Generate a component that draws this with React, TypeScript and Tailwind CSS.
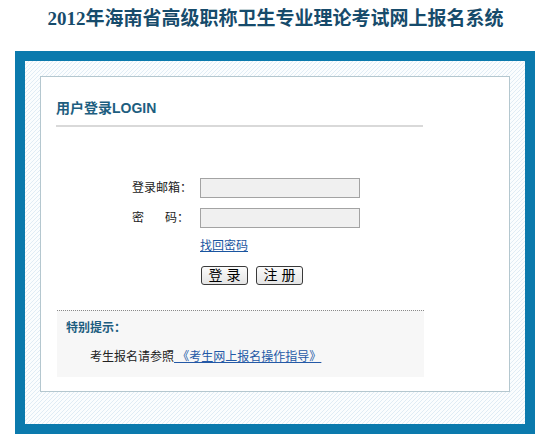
export default function App() {
  return (
    <div className="w-[551px] h-[446px] bg-white overflow-hidden font-['Liberation_Sans','Noto_Sans_CJK_SC',sans-serif] text-[12px] text-[#222]">
      {/* Title */}
      <div className="h-[51px] pt-[8px] text-center">
        <h1 className="text-[19px] leading-[22px] font-bold text-[#164b6b] font-['Liberation_Serif','Noto_Sans_CJK_SC',serif]">
          2012年海南省高级职称卫生专业理论考试网上报名系统
        </h1>
      </div>

      {/* Frame */}
      <div className="ml-[15px] w-[520px] h-[383px] border-[10px] border-[#0b7aad] p-[15px] bg-[#fbfdfe] bg-[linear-gradient(135deg,transparent_38%,#e0ecf5_38%,#e0ecf5_62%,transparent_62%)] bg-[length:4px_4px]">
        <div className="w-[470px] h-[316px] bg-white border border-[#b4c7cf]">
          {/* Heading */}
          <div className="ml-[15px] w-[367px] mt-[22px] pb-[8px] border-b-2 border-[#d9d9d9]">
            <h2 className="text-[14px] leading-[18px] font-bold text-[#1d5e80]">用户登录LOGIN</h2>
          </div>

          {/* Form */}
          <div className="mt-[51px] ml-[91px]">
            <div className="flex items-center h-[20px]">
              <span className="w-[68px] leading-[20px]">登录邮箱：</span>
              <input className="w-[160px] h-[20px] border border-[#a3a3a3] bg-[#f0f0f0] outline-none" />
            </div>
            <div className="flex items-center h-[20px] mt-[10px]">
              <span className="w-[68px] leading-[20px] flex">
                <span className="w-[33px]">密</span>
                <span>码：</span>
              </span>
              <input type="password" className="w-[160px] h-[20px] border border-[#a3a3a3] bg-[#f0f0f0] outline-none" />
            </div>
            <div className="mt-[10px] ml-[68px] leading-[16px]">
              <a href="#" className="text-[#1a55a0] underline">找回密码</a>
            </div>
            <div className="mt-[12px] ml-[69px] flex gap-[8px]">
              <button className="w-[47px] h-[19px] rounded-[3px] border border-[#3a3a3a] bg-[linear-gradient(#fbfbfb,#e4e4e4)] text-[14px] leading-[17px] text-black">登 录</button>
              <button className="w-[47px] h-[19px] rounded-[3px] border border-[#3a3a3a] bg-[linear-gradient(#fbfbfb,#e4e4e4)] text-[14px] leading-[17px] text-black">注 册</button>
            </div>
          </div>

          {/* Notice */}
          <div className="mt-[25px] ml-[16px] w-[367px] border-t border-dotted border-[#8a8a8a] bg-[#f7f7f7] pt-[10px] pb-[13px]">
            <p className="pl-[9px] leading-[14px] font-bold text-[#1d5e80]">特别提示：</p>
            <p className="pl-[33px] mt-[15px] leading-[14px]">
              考生报名请参照
              <a href="#" className="text-[#2459a6] underline">&nbsp;《考生网上报名操作指导》</a>
            </p>
          </div>
        </div>
      </div>
    </div>
  )
}
